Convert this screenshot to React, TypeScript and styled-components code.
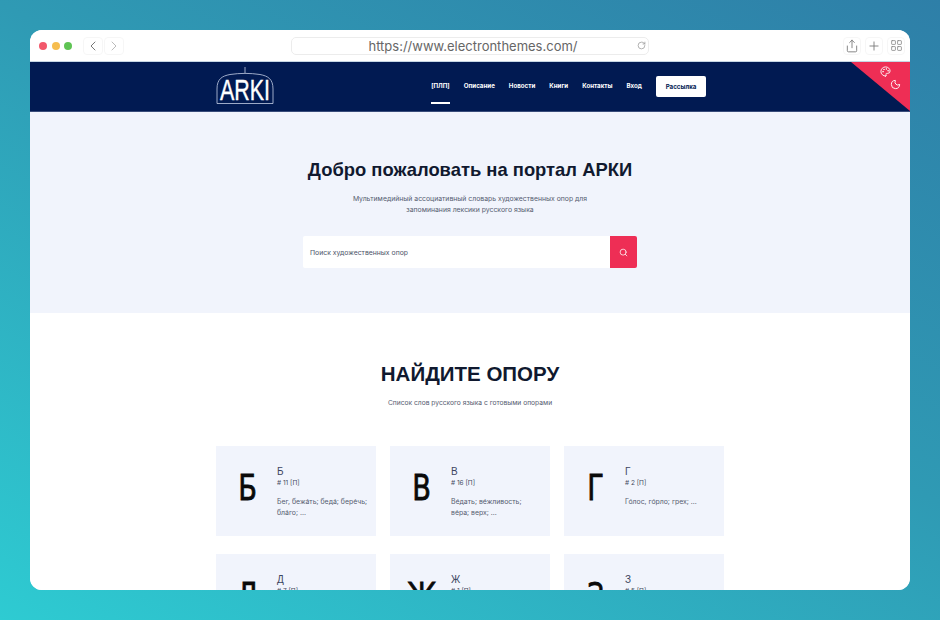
import React from "react";
import styled, { createGlobalStyle } from "styled-components";
import { ChevronLeft, ChevronRight, Share, Plus, LayoutGrid, RotateCw, Search, Moon, Palette } from "lucide-react";

const letters = [
	{ glyph: "Б", name: "Б", tag: "# 11 [П]", words: "Бег, бежа́ть; беда́; бере́чь;\nбла́го; ..." },
	{ glyph: "В", name: "В", tag: "# 16 [П]", words: "Ве́дать; ве́жливость;\nве́ра; верх; ..." },
	{ glyph: "Г", name: "Г", tag: "# 2 [П]", words: "Го́лос, го́рло; грех; ..." },
	{ glyph: "Д", name: "Д", tag: "# 7 [П]", words: "" },
	{ glyph: "Ж", name: "Ж", tag: "# 1 [П]", words: "" },
	{ glyph: "З", name: "З", tag: "# 5 [П]", words: "" },
];

const navItems = ["[ПЛП]", "Описание", "Новости", "Книги", "Контакты", "Вход"];

export default function App() {
	return (
		<>
			<GlobalStyle />
			<Desktop>
				<BrowserWindow>
					<Toolbar>
						<Lights>
							<Light $color="#f2586b" />
							<Light $color="#f6bd4f" />
							<Light $color="#5fc454" />
						</Lights>
						<HistoryButtons>
							<ToolButton $wide>
								<ChevronLeft size={16} color="#777" strokeWidth={1.5} />
							</ToolButton>
							<ToolButton $wide>
								<ChevronRight size={16} color="#bbb" strokeWidth={1.5} />
							</ToolButton>
						</HistoryButtons>
						<AddressBar>
							<AddressText>https://www.electronthemes.com/</AddressText>
							<ReloadIcon>
								<RotateCw size={9} color="#999" />
							</ReloadIcon>
						</AddressBar>
						<ToolActions>
							<ToolButton>
								<Share size={14} color="#777" strokeWidth={1.5} />
							</ToolButton>
							<ToolButton>
								<Plus size={14} color="#777" strokeWidth={1.5} />
							</ToolButton>
							<ToolButton>
								<LayoutGrid size={13} color="#888" strokeWidth={1.5} />
							</ToolButton>
						</ToolActions>
					</Toolbar>
					<Page>
						<Header>
							<HeaderInner>
								<Logo viewBox="0 0 58 37" aria-label="АРКИ">
									<path d="M29 0v6M1 36.500V22C1 12 6 9 14 7.500C24 6 34 6 44 7.500C52 9 57 12 57 22V36.500Z" fill="none" stroke="#c5cfe6" strokeWidth="0.8" />
									<LogoText x="29" y="33" textAnchor="middle" textLength="50" lengthAdjust="spacingAndGlyphs">ARKI</LogoText>
								</Logo>
								<Nav>
									{navItems.map((item, index) => (
										<NavItem key={item} $active={index === 0}>{item}</NavItem>
									))}
									<Subscribe>Рассылка</Subscribe>
								</Nav>
							</HeaderInner>
							<ThemeCorner>
								<CornerIcon $offset={0}>
									<Palette size={11} color="#fff" strokeWidth={2} />
								</CornerIcon>
								<CornerIcon $offset={10}>
									<Moon size={11} color="#fff" strokeWidth={2} />
								</CornerIcon>
							</ThemeCorner>
						</Header>
						<Hero>
							<HeroTitle>Добро пожаловать на портал АРКИ</HeroTitle>
							<HeroText>
								Мультимедийный ассоциативный словарь художественных опор для
								<br />
								запоминания лексики русского языка
							</HeroText>
							<SearchForm>
								<SearchField>Поиск художественных опор</SearchField>
								<SearchButton>
									<Search size={9} color="#fff" strokeWidth={2} />
								</SearchButton>
							</SearchForm>
						</Hero>
						<Section>
							<SectionTitle>НАЙДИТЕ ОПОРУ</SectionTitle>
							<SectionText>Список слов русского языка с готовыми опорами</SectionText>
							<CardGrid>
								{letters.map((letter) => (
									<Card key={letter.name}>
										<Glyph>{letter.glyph}</Glyph>
										<CardBody>
											<CardName>{letter.name}</CardName>
											<CardTag>{letter.tag}</CardTag>
											<CardWords>{letter.words}</CardWords>
										</CardBody>
									</Card>
								))}
							</CardGrid>
						</Section>
					</Page>
				</BrowserWindow>
			</Desktop>
		</>
	);
}

const GlobalStyle = createGlobalStyle`
	html, body {
		margin: 0;
		height: 100%;
		overflow: hidden;
	}

	* {
		box-sizing: border-box;
	}

	body {
		font-family: "Liberation Sans", Arial, sans-serif;
	}
`;

const Desktop = styled.div`
	width: 940px;
	height: 620px;
	padding: 30px;
	background: linear-gradient(208deg, #2e7fa8 0%, #2f9ab4 45%, #2ecbd2 100%);
`;

const BrowserWindow = styled.div`
	width: 880px;
	height: 560px;
	border-radius: 12px;
	overflow: hidden;
	background: #fff;
`;

const Toolbar = styled.div`
	height: 32px;
	display: flex;
	align-items: center;
	padding: 0 5px 0 9px;
	background: #fff;
	border-bottom: 1px solid #c6d6e4;
`;

const Lights = styled.div`
	display: flex;
	gap: 4.500px;
	margin-right: 11px;
`;

const Light = styled.span<{ $color: string }>`
	width: 8px;
	height: 8px;
	border-radius: 50%;
	background: ${(props) => props.$color};
`;

const HistoryButtons = styled.div`
	display: flex;
	gap: 1px;
`;

const ToolButton = styled.div<{ $wide?: boolean }>`
	width: ${(props) => (props.$wide ? "20px" : "18px")};
	height: 18px;
	display: flex;
	align-items: center;
	justify-content: center;
	border: 1px solid #f6f6f6;
	border-radius: 4px;
`;

const AddressBar = styled.div`
	position: relative;
	width: 358px;
	height: 18px;
	margin-left: 167px;
	padding-left: 6px;
	display: flex;
	align-items: center;
	justify-content: center;
	border: 1px solid #ececec;
	border-radius: 5px;
`;

const AddressText = styled.span`
	font-family: "Inter", sans-serif;
	font-size: 13px;
	color: #666;
`;

const ReloadIcon = styled.span`
	position: absolute;
	right: 2px;
	top: 3px;
	display: flex;
`;

const ToolActions = styled.div`
	display: flex;
	gap: 4px;
	margin-left: auto;
`;

const Page = styled.div`
	display: flex;
	flex-direction: column;
`;

const Header = styled.header`
	position: relative;
	height: 50px;
	background: #011a52;
	border-bottom: 1px solid #394c7a;
`;

const HeaderInner = styled.div`
	width: 490px;
	height: 100%;
	margin-left: 186px;
	display: flex;
	align-items: center;
	justify-content: space-between;
`;

const Logo = styled.svg`
	width: 58px;
	height: 37px;
	margin-top: -3px;
	overflow: visible;
`;

const LogoText = styled.text`
	font-family: "Liberation Sans", sans-serif;
	font-size: 29px;
	fill: #fff;
	stroke: #fff;
	stroke-width: 0.4px;
`;

const Nav = styled.nav`
	height: 100%;
	display: flex;
	align-items: center;
	gap: 14px;
`;

const NavItem = styled.a<{ $active?: boolean }>`
	height: 42px;
	align-self: flex-start;
	padding-top: 6px;
	display: flex;
	align-items: center;
	font-family: "Inter", sans-serif;
	font-size: 6.200px;
	font-weight: 700;
	color: #fff;
	border-bottom: 2px solid ${(props) => (props.$active ? "#fff" : "transparent")};
`;

const Subscribe = styled.button`
	width: 50px;
	height: 21px;
	padding: 0;
	border: none;
	border-radius: 2px;
	background: #fff;
	color: #011a52;
	font-family: "Inter", sans-serif;
	font-size: 6.200px;
	font-weight: 700;
`;

const ThemeCorner = styled.div`
	position: absolute;
	top: 0;
	right: 0;
	width: 59px;
	height: 49px;
	background: #ee2e55;
	clip-path: polygon(0 0, 100% 0, 100% 100%);
`;

const CornerIcon = styled.span<{ $offset: number }>`
	position: absolute;
	top: ${(props) => 4 + props.$offset * 1.3}px;
	left: ${(props) => 29 + props.$offset}px;
	display: flex;
`;

const Hero = styled.section`
	height: 201px;
	display: flex;
	flex-direction: column;
	align-items: center;
	padding-top: 47px;
	background: #f1f4fc;
`;

const HeroTitle = styled.h1`
	margin: 0 0 12px;
	font-size: 18.400px;
	line-height: 22px;
	font-weight: 700;
	color: #10192f;
`;

const HeroText = styled.p`
	margin: 0 0 21px;
	font-family: "Inter", sans-serif;
	font-size: 6.850px;
	line-height: 11px;
	text-align: center;
	color: #555c70;
`;

const SearchForm = styled.div`
	width: 334px;
	height: 32px;
	display: flex;
	background: #fff;
	border-radius: 2px;
`;

const SearchField = styled.div`
	flex: 1;
	display: flex;
	align-items: center;
	padding-left: 7px;
	font-family: "Inter", sans-serif;
	font-size: 6.850px;
	color: #4d5468;
`;

const SearchButton = styled.div`
	width: 27px;
	display: flex;
	align-items: center;
	justify-content: center;
	background: #ee2e55;
	border-radius: 0 2px 2px 0;
`;

const Section = styled.section`
	display: flex;
	flex-direction: column;
	align-items: center;
	padding-top: 48px;
	background: #fff;
`;

const SectionTitle = styled.h2`
	margin: 0 0 13px;
	font-size: 20.500px;
	line-height: 25px;
	font-weight: 700;
	color: #10192f;
`;

const SectionText = styled.p`
	margin: 0 0 38px;
	font-family: "Inter", sans-serif;
	font-size: 6.700px;
	line-height: 9px;
	color: #555c70;
`;

const CardGrid = styled.div`
	display: grid;
	grid-template-columns: repeat(3, 160px);
	column-gap: 14px;
	row-gap: 18px;
`;

const Card = styled.article`
	height: 90px;
	display: flex;
	padding-top: 21px;
	background: #f1f4fc;
`;

const Glyph = styled.div`
	width: 61px;
	padding: 2px 0 0 3px;
	text-align: center;
	font-family: "DejaVu Sans", sans-serif;
	font-size: 35px;
	line-height: 38px;
	color: #0a0a0a;
	-webkit-text-stroke: 0.8px #0a0a0a;
	transform: scaleX(0.78);
`;

const CardBody = styled.div`
	flex: 1;
`;

const CardName = styled.div`
	font-size: 10px;
	line-height: 10px;
	color: #3c4560;
`;

const CardTag = styled.div`
	margin-top: 2px;
	font-family: "Inter", sans-serif;
	font-size: 6.500px;
	line-height: 9px;
	color: #444b60;
`;

const CardWords = styled.div`
	margin-top: 8px;
	font-family: "Inter", sans-serif;
	font-size: 6.900px;
	line-height: 11px;
	color: #555c70;
	white-space: pre-line;
`;
